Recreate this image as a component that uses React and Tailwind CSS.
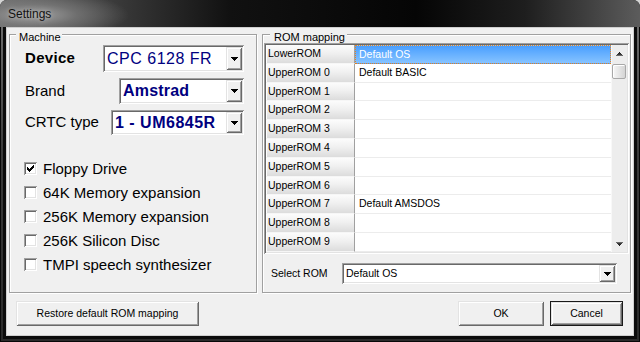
import React from "react";

const SUNKEN =
  "shadow-[inset_1px_1px_0_#a0a0a0,inset_-1px_-1px_0_#ffffff,inset_2px_2px_0_#696969,inset_-2px_-2px_0_#e3e3e3]";
const RAISED =
  "shadow-[inset_1px_1px_0_#e3e3e3,inset_-1px_-1px_0_#696969,inset_2px_2px_0_#ffffff,inset_-2px_-2px_0_#a0a0a0]";
const GROUP =
  "border border-[#a0a0a0] shadow-[1px_1px_0_#ffffff,inset_1px_1px_0_#ffffff]";

function DownTri() {
  return (
    <svg width="7" height="4" viewBox="0 0 7 4" shapeRendering="crispEdges">
      <rect x="0" y="0" width="7" height="1" fill="#000" />
      <rect x="1" y="1" width="5" height="1" fill="#000" />
      <rect x="2" y="2" width="3" height="1" fill="#000" />
      <rect x="3" y="3" width="1" height="1" fill="#000" />
    </svg>
  );
}

function ScrollTri({ up }) {
  return (
    <svg
      width="7"
      height="4"
      viewBox="0 0 7 4"
      shapeRendering="crispEdges"
      className={up ? "rotate-180" : ""}
    >
      <rect x="0" y="0" width="7" height="1" fill="#6a6a6a" />
      <rect x="1" y="1" width="5" height="1" fill="#3a3a3a" />
      <rect x="2" y="2" width="3" height="1" fill="#2a2a2a" />
      <rect x="3" y="3" width="1" height="1" fill="#1a1a1a" />
    </svg>
  );
}

function Combo({ className, textClass, children }) {
  return (
    <div className={`flex p-[2px] bg-white ${SUNKEN} ${className}`}>
      <div
        className={`flex-1 flex items-center pl-[2px] overflow-hidden whitespace-nowrap ${textClass}`}
      >
        {children}
      </div>
      <div
        className={`w-[16px] shrink-0 flex items-center justify-center bg-[#f0f0f0] ${RAISED}`}
      >
        <DownTri />
      </div>
    </div>
  );
}

function CheckMark() {
  const cols = [2, 3, 4, 3, 2, 1, 0];
  return (
    <svg width="7" height="7" viewBox="0 0 7 7" shapeRendering="crispEdges">
      {cols.map((y, x) => (
        <rect key={x} x={x} y={y} width="1" height="3" fill="#000" />
      ))}
    </svg>
  );
}

function CheckBox({ checked, label }) {
  return (
    <div className="flex items-center h-[24px] pl-[14px]">
      <div
        className={`w-[13px] h-[13px] shrink-0 bg-white flex items-center justify-center ${SUNKEN}`}
      >
        {checked && <CheckMark />}
      </div>
      <span className="ml-[6px] text-[15px] leading-[17px] whitespace-nowrap">
        {label}
      </span>
    </div>
  );
}

function Button({ className, children }) {
  return (
    <div
      className={`flex items-center justify-center bg-[#f0f0f0] text-[10.5px] whitespace-nowrap ${RAISED} ${className}`}
    >
      {children}
    </div>
  );
}

const ROWS = [
  ["LowerROM", "Default OS"],
  ["UpperROM 0", "Default BASIC"],
  ["UpperROM 1", ""],
  ["UpperROM 2", ""],
  ["UpperROM 3", ""],
  ["UpperROM 4", ""],
  ["UpperROM 5", ""],
  ["UpperROM 6", ""],
  ["UpperROM 7", "Default AMSDOS"],
  ["UpperROM 8", ""],
  ["UpperROM 9", ""],
];

export default function App() {
  return (
    <div className="w-[640px] h-[342px] bg-[#d4d4d4] font-['Liberation_Sans',Arial,sans-serif]">
      <div className="w-full h-full flex flex-col rounded-t-[7px] overflow-hidden bg-[#080808]">
        {/* Title bar */}
        <div className="h-[27px] shrink-0 flex items-center pl-[8px] bg-[radial-gradient(ellipse_95px_24px_at_34px_15px,rgba(165,165,165,0.95)_0%,rgba(130,130,130,0.65)_45%,rgba(0,0,0,0)_100%),linear-gradient(to_right,#6a6a6a_0%,#3a3a3a_18%,#111111_36%,#050505_65%,#1e1e1e_82%,#5c5c5c_100%)]">
          <span className="text-[12px] text-[#121212] [text-shadow:0_0_5px_rgba(255,255,255,0.45)]">
            Settings
          </span>
        </div>

        {/* Frame */}
        <div className="flex-1 flex bg-[#080808] px-[1px] pb-[1px]">
          <div className="flex-1 flex bg-[linear-gradient(to_bottom,#6a6a6a,#3a3a3a_40%,#2a2a2a)] px-[2px] pb-[2px]">
            <div className="flex-1 flex bg-[#0c0c0c] px-[3px] pb-[3px]">
              <div className="flex-1 flex bg-[#cfcfcf] px-[1px] pt-[1px] pb-[1px]">
                {/* Client */}
                <div className="flex-1 flex flex-col bg-[#f0f0f0] text-black">
                  <div className="flex pl-[2px]">
                    {/* Machine group */}
                    <fieldset className={`w-[248px] h-[265px] ${GROUP}`}>
                      <legend className="ml-[6px] pl-[3px] pr-[1px] pt-[6px] leading-[6px] text-[11px] bg-[#f0f0f0]">
                        Machine
                      </legend>
                      <div className="flex flex-col pt-[5px]">
                        <div className="flex items-center h-[27px] pl-[15px] pr-[12px]">
                          <span className="text-[15px] font-bold tracking-[0.3px]">
                            Device
                          </span>
                          <Combo
                            className="ml-auto w-[141px] h-[27px]"
                            textClass="text-[16px] tracking-[0.5px] text-[#000080]"
                          >
                            CPC 6128 FR
                          </Combo>
                        </div>
                        <div className="flex items-center h-[26px] mt-[6px] pl-[15px] pr-[12px]">
                          <span className="text-[15px]">Brand</span>
                          <Combo
                            className="ml-auto w-[125px] h-[26px]"
                            textClass="text-[16px] font-bold tracking-[0.2px] text-[#000080]"
                          >
                            Amstrad
                          </Combo>
                        </div>
                        <div className="flex items-center h-[25px] mt-[6px] pl-[15px] pr-[12px]">
                          <span className="text-[15px]">CRTC type</span>
                          <Combo
                            className="ml-auto w-[133px] h-[25px]"
                            textClass="text-[16px] font-bold tracking-[0.5px] text-[#000080]"
                          >
                            1 - UM6845R
                          </Combo>
                        </div>
                        <div className="flex flex-col mt-[21px]">
                          <CheckBox checked label="Floppy Drive" />
                          <CheckBox label="64K Memory expansion" />
                          <CheckBox label="256K Memory expansion" />
                          <CheckBox label="256K Silicon Disc" />
                          <CheckBox label="TMPI speech synthesizer" />
                        </div>
                      </div>
                    </fieldset>

                    {/* ROM mapping group */}
                    <fieldset className={`ml-[5px] w-[369px] h-[265px] ${GROUP}`}>
                      <legend className="ml-[7px] pl-[4px] pr-[2px] pt-[6px] leading-[6px] text-[11px] bg-[#f0f0f0]">
                        ROM mapping
                      </legend>
                      <div className="flex flex-col pt-[3px]">
                        <div
                          className={`ml-[1px] w-[365px] h-[211px] p-[2px] bg-white flex ${SUNKEN}`}
                        >
                          <div className="flex-1 flex flex-col">
                            {ROWS.map(([h, v], i) => (
                              <div key={h} className="flex h-[18.8px] shrink-0">
                                <div className="w-[89px] shrink-0 flex items-center pl-[2px] text-[10.5px] whitespace-nowrap bg-[linear-gradient(to_bottom,#fcfcfc,#f0f0f0_45%,#dcdcdc)] border-r border-r-[#a0a0a0] border-b border-b-[#f6f6f6] shadow-[inset_1px_0_0_#ffffff]">
                                  {h}
                                </div>
                                {i === 0 ? (
                                  <div className="flex-1 flex items-center pl-[3px] text-[10.5px] text-white border border-dotted border-[#e8831f] bg-[linear-gradient(to_bottom,#4a9fff,#86c3ff)]">
                                    {v}
                                  </div>
                                ) : (
                                  <div className="flex-1 flex items-center pl-[4px] text-[10.5px] whitespace-nowrap border-b border-[#ececec]">
                                    {v}
                                  </div>
                                )}
                              </div>
                            ))}
                          </div>
                          {/* Scrollbar */}
                          <div className="w-[16px] shrink-0 flex flex-col bg-[#ededed] border-l border-[#f8f8f8]">
                            <div className="h-[17px] flex items-center justify-center">
                              <ScrollTri up />
                            </div>
                            <div className="mt-[2px] w-[14px] h-[15px] rounded-[2px] border border-[#a8a8a8] bg-[linear-gradient(to_right,#f7f7f7,#e2e2e2_60%,#d4d4d4)] shadow-[inset_1px_1px_0_#ffffff]" />
                            <div className="flex-1" />
                            <div className="h-[17px] flex items-center justify-center">
                              <ScrollTri />
                            </div>
                          </div>
                        </div>

                        <div className="flex items-center mt-[9px] h-[21px] pl-[8px]">
                          <span className="w-[71px] text-[10.5px] whitespace-nowrap">
                            Select ROM
                          </span>
                          <Combo className="w-[275px] h-[21px]" textClass="text-[10.5px]">
                            Default OS
                          </Combo>
                        </div>
                      </div>
                    </fieldset>
                  </div>

                  {/* Bottom buttons */}
                  <div className="flex mt-[8px]">
                    <Button className="ml-[9px] w-[183px] h-[25px]">
                      Restore default ROM mapping
                    </Button>
                    <Button className="ml-auto w-[86px] h-[25px]">OK</Button>
                    <div className="ml-[6px] mr-[10px] w-[73px] h-[25px] border border-[#1a1a1a] flex">
                      <Button className="flex-1">Cancel</Button>
                    </div>
                  </div>
                </div>
              </div>
            </div>
          </div>
        </div>
      </div>
    </div>
  );
}
